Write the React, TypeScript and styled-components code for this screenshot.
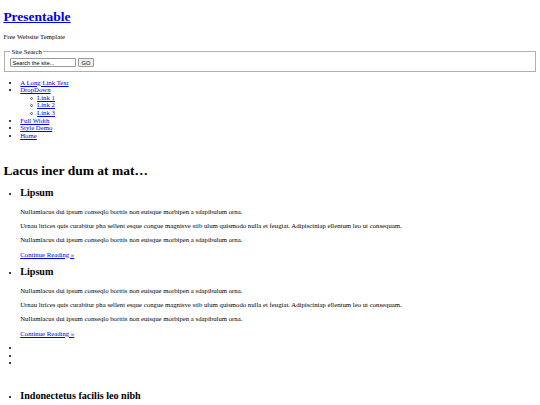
import React from "react";
import styled, { createGlobalStyle } from "styled-components";

// The reference is a plain, unstyled page shown at 0.42 scale,
// so every size here is the browser default times 0.42.
const GlobalStyle = createGlobalStyle`
  body {
    margin: 0 3.375px 3.375px;
    font-family: "Liberation Serif", "Times New Roman", serif;
    font-size: 6.75px;
    line-height: 1.125;
    color: #000;
    background: #fff;
  }
  a {
    color: #0000ee;
  }
`;

const Header = styled.header`
  display: block;
`;

const Logo = styled.h1`
  font-size: 13.5px;
  margin: 0.67em 0;
`;

const Tagline = styled.p`
  margin: 1em 0;
`;

const SearchBox = styled.fieldset`
  margin: 0 1px;
  padding: 2.9px 0.75em 0.625em;
  border: 1px solid #b0b0b0;
`;

const Legend = styled.legend`
  padding: 0 1px;
`;

const SearchInput = styled.input`
  box-sizing: border-box;
  font-family: "Liberation Sans", Arial, sans-serif;
  font-size: 5.6px;
  width: 66px;
  height: 8.2px;
  padding: 0 1px;
  border: 1px solid #9a9a9a;
  border-radius: 1px;
  margin: 0 1.5px 0 0;
  vertical-align: middle;
`;

const SearchButton = styled.button`
  box-sizing: border-box;
  font-family: "Liberation Sans", Arial, sans-serif;
  font-size: 5.6px;
  height: 8.2px;
  width: 16px;
  padding: 0;
  border: 1px solid #9a9a9a;
  border-radius: 1px;
  background: #efefef;
  color: #000;
  vertical-align: middle;
`;

const Nav = styled.ul`
  margin: 1em 0;
  padding-left: 2.5em;
`;

const SubNav = styled.ul`
  list-style: none;
  margin: 0;
  padding-left: 2.5em;
`;

// hollow circle bullet, drawn so it stays open at this small size
const SubItem = styled.li`
  &::before {
    content: "";
    display: inline-block;
    box-sizing: border-box;
    width: 3.2px;
    height: 3.2px;
    margin: 0 4.1px 0 -7.3px;
    border: 1px solid #666;
    border-radius: 50%;
    vertical-align: middle;
  }
`;

const Content = styled.div`
  padding-top: 7.4px;
`;

const Heading = styled.h2`
  font-size: 13.5px;
  margin: 0.67em 0;
`;

const List = styled.ul`
  margin: 1em 0;
  padding-left: 2.5em;
`;

const ItemTitle = styled.h3`
  font-size: 10.125px;
  margin: 7.6px 0 9.5px;
`;

const Para = styled.p`
  margin: 1em 0;
`;

const Sidebar = styled.ul`
  margin: 1em 0;
  padding: 8.6px 0 0 2.5em;
`;

const posts = ["Lipsum", "Lipsum"];
const subLinks = ["Link 1", "Link 2", "Link 3"];

export default function App(): React.ReactElement {
  return (
    <>
      <GlobalStyle />
      <Header>
        <Logo>
          <a href="#">Presentable</a>
        </Logo>
        <Tagline>Free Website Template</Tagline>
        <form onSubmit={(e) => e.preventDefault()}>
          <SearchBox>
            <Legend>Site Search</Legend>
            <SearchInput type="text" defaultValue="Search the site..." />
            <SearchButton type="submit">GO</SearchButton>
          </SearchBox>
        </form>
        <Nav>
          <li>
            <a href="#">A Long Link Text</a>
          </li>
          <li>
            <a href="#">DropDown</a>
            <SubNav>
              {subLinks.map((label) => (
                <SubItem key={label}>
                  <a href="#">{label}</a>
                </SubItem>
              ))}
            </SubNav>
          </li>
          <li>
            <a href="#">Full Width</a>
          </li>
          <li>
            <a href="#">Style Demo</a>
          </li>
          <li>
            <a href="#">Home</a>
          </li>
        </Nav>
      </Header>
      <Content>
        <Heading>Lacus iner dum at mat…</Heading>
        <List>
          {posts.map((title, i) => (
            <li key={`post${i}`}>
              <ItemTitle>{title}</ItemTitle>
              <Para>
                Nullamlacus dui ipsum conseqlo borttis non euisque morbipen a
                sdapibulum orna.
              </Para>
              <Para>
                Urnau ltrices quis curabitur pha sellent esque congue magnisve
                stib ulum quismodo nulla et feugiat. Adipisciniap ellentum leo ut
                consequam.
              </Para>
              <Para>
                Nullamlacus dui ipsum conseqlo borttis non euisque morbipen a
                sdapibulum orna.
              </Para>
              <Para>
                <a href="#">Continue Reading »</a>
              </Para>
            </li>
          ))}
        </List>
        <List>
          <li>&nbsp;</li>
          <li>&nbsp;</li>
          <li>&nbsp;</li>
        </List>
      </Content>
      <Sidebar>
        <li>
          <ItemTitle>Indonectetus facilis leo nibh</ItemTitle>
        </li>
      </Sidebar>
    </>
  );
}
